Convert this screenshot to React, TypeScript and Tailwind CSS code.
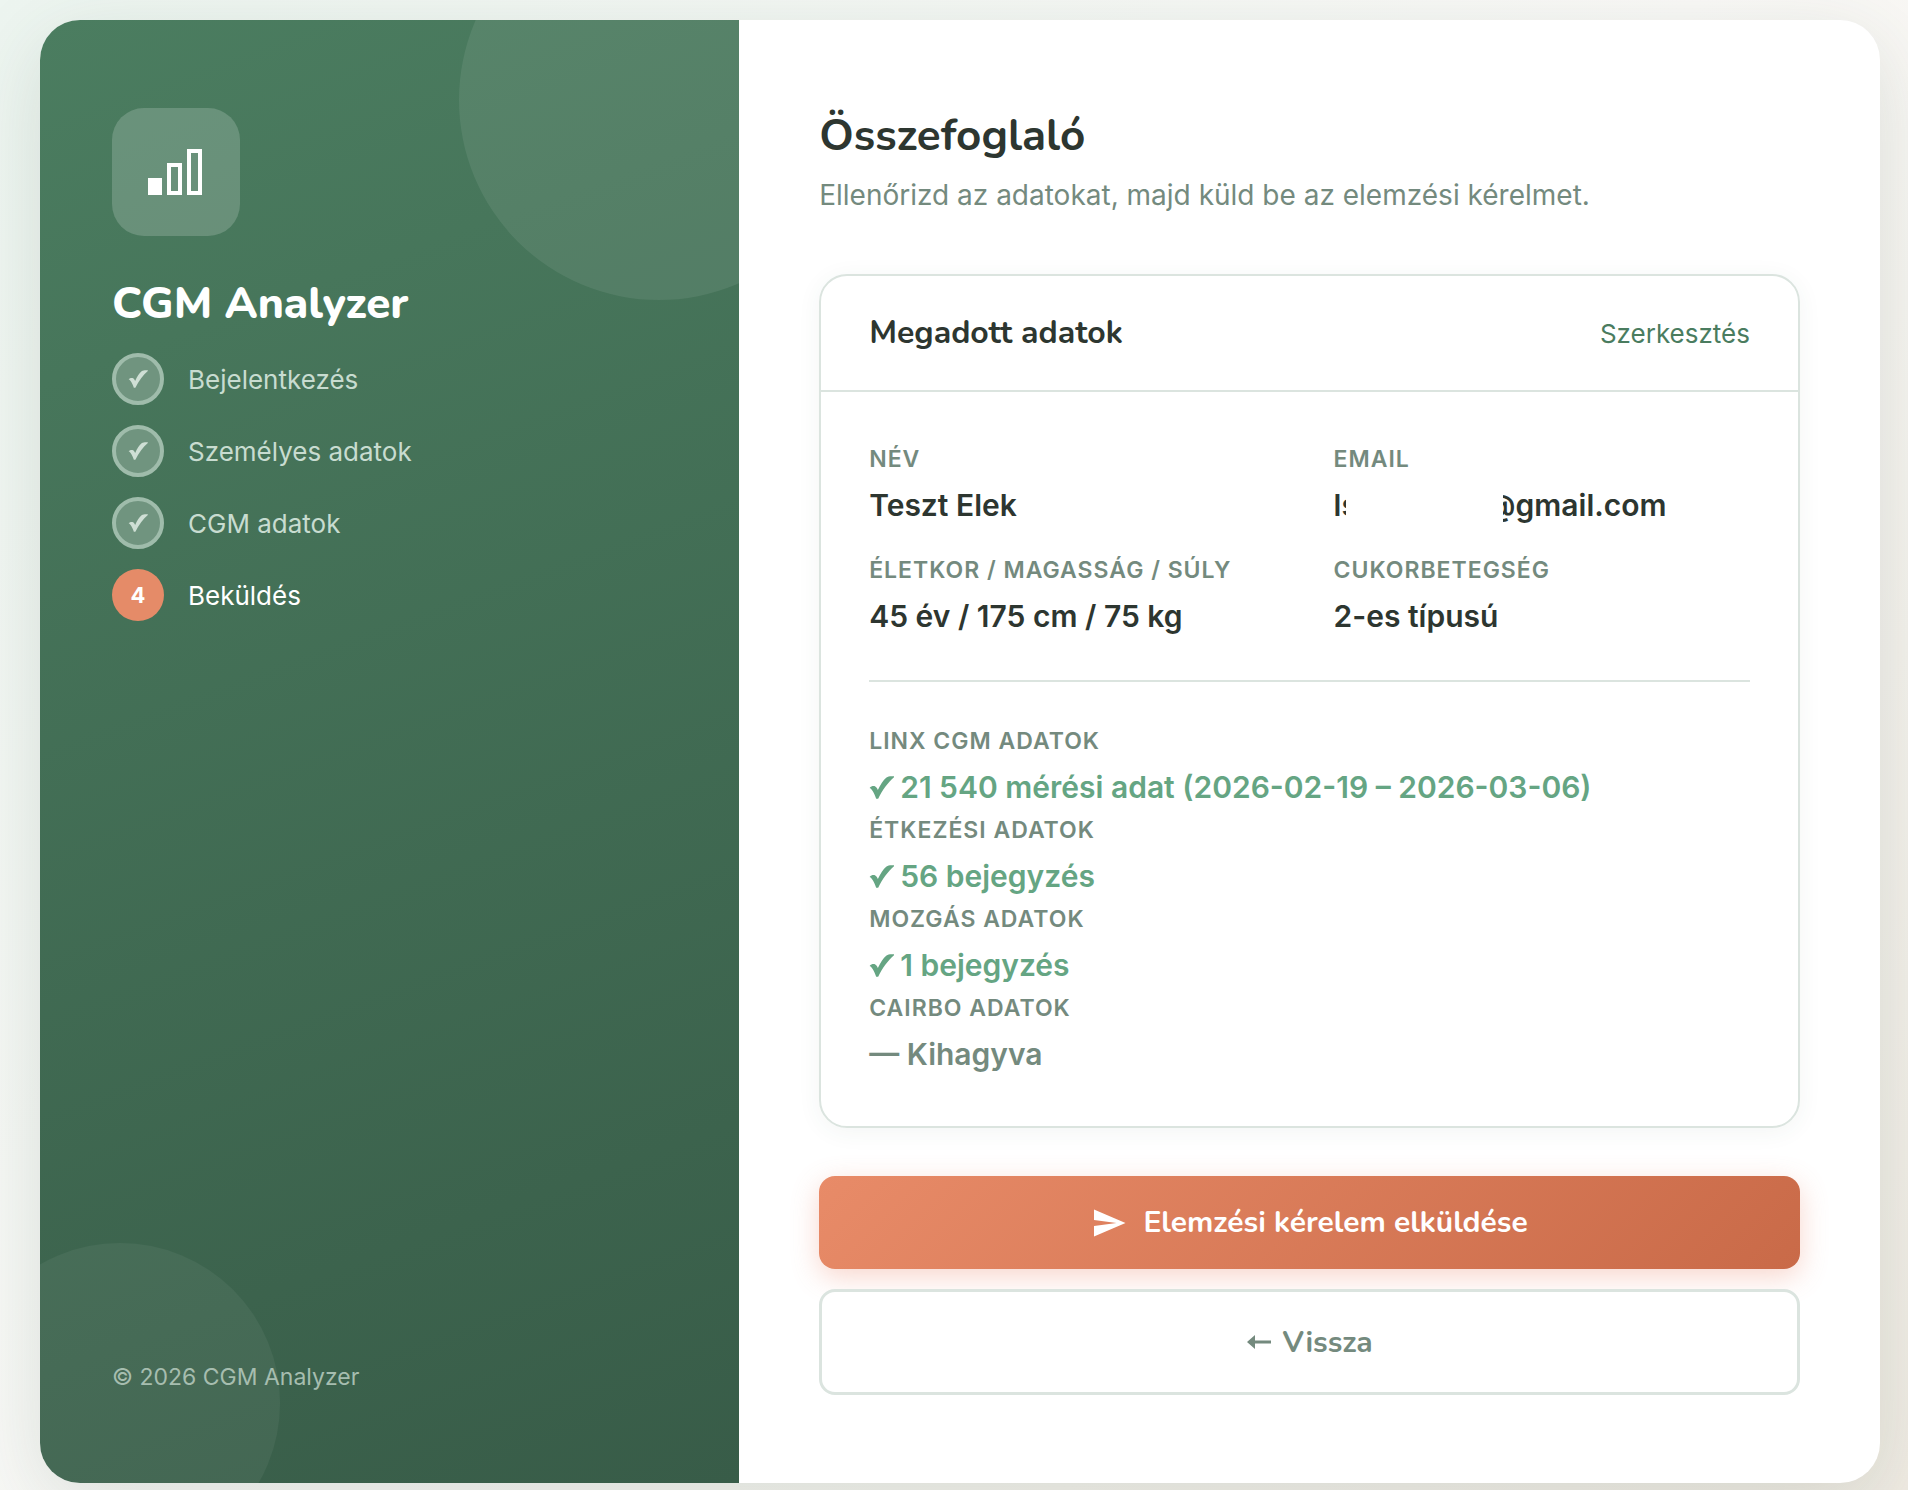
import clsx from 'clsx'

interface Step {
  label: string
  status: 'done' | 'active'
}

interface DataSource {
  label: string
  value: string
  skipped?: boolean
}

const STEPS: Step[] = [
  { label: 'Bejelentkezés', status: 'done' },
  { label: 'Személyes adatok', status: 'done' },
  { label: 'CGM adatok', status: 'done' },
  { label: 'Beküldés', status: 'active' },
]

const SOURCES: DataSource[] = [
  { label: 'Linx CGM adatok', value: '21 540 mérési adat (2026-02-19 – 2026-03-06)' },
  { label: 'Étkezési adatok', value: '56 bejegyzés' },
  { label: 'Mozgás adatok', value: '1 bejegyzés' },
  { label: 'Cairbo adatok', value: '— Kihagyva', skipped: true },
]

function CheckMark({ className }: { className: string }) {
  return (
    <svg viewBox="0 0 24 22" fill="currentColor" className={className} aria-hidden="true">
      <path d="M0.6 11.4C2 9.8 4.4 9.2 6 10C7.3 10.8 8 12 8.5 13.4C11 8 13.6 4 16.8 1.3C18.4 0.2 21 0 24 0.3V1.1C18.4 6.2 13 12.8 8.8 21.8H6.9C6 19 4.8 16.6 3.8 14.8C3 13.4 2 12 0.6 11.4Z" />
    </svg>
  )
}

function LogoIcon() {
  return (
    <svg viewBox="0 0 56 46" fill="currentColor" className="w-14" aria-hidden="true">
      <path d="M0 29h14v17H0z" />
      <path fillRule="evenodd" d="M19 14h15v32H19zM23 18v24h7V18z" />
      <path fillRule="evenodd" d="M39 0h15v46H39zM43 4v38h7V4z" />
    </svg>
  )
}

function StepItem({ step, number }: { step: Step; number: number }) {
  const done = step.status === 'done'
  return (
    <li className="flex items-center gap-6">
      <span
        className={clsx(
          'flex size-[52px] items-center justify-center rounded-full text-[22px] font-bold',
          done ? 'border-4 border-[#9fbcab] bg-[#70947f] text-[#cfdfd5]' : 'bg-[#e58b68] text-white'
        )}
      >
        {done ? <CheckMark className="h-[18px] w-5" /> : number}
      </span>
      <span className={clsx('text-[26px]', done ? 'text-[#c8dcd0]' : 'text-white')}>
        {step.label}
      </span>
    </li>
  )
}

const labelClass = 'mb-1 text-[23px] leading-[38px] font-semibold tracking-[1px] text-[#748a7e] uppercase'
const valueClass = 'text-[30px] leading-[47px] font-semibold'

function Sidebar() {
  return (
    <aside className="relative flex w-[38%] flex-col overflow-hidden bg-[linear-gradient(160deg,#4b7d60_0%,#385c48_100%)] px-18 py-22 text-white">
      <div className="absolute -top-[120px] -right-[120px] size-[400px] rounded-full bg-white/8" />
      <div className="absolute -bottom-20 -left-20 size-80 rounded-full bg-white/5" />
      <div className="flex size-32 items-center justify-center rounded-4xl bg-white/18">
        <LogoIcon />
      </div>
      <h1 className="mt-10 font-['Nunito','Open_Sans',sans-serif] text-[44px] leading-[57px] font-extrabold">
        CGM Analyzer
      </h1>
      <ol className="mt-5 flex flex-col gap-5">
        {STEPS.map((step, index) => (
          <StepItem key={step.label} step={step} number={index + 1} />
        ))}
      </ol>
      <p className="relative mt-auto text-[23px] leading-9 text-[#a6bdaf]">© 2026 CGM Analyzer</p>
    </aside>
  )
}

function SummaryCard() {
  return (
    <section className="mt-14 rounded-[28px] border-2 border-[#dbe4df] shadow-[0_4px_24px_rgba(50,80,62,0.06)]">
      <header className="flex items-center justify-between border-b-2 border-[#dbe4df] px-12 py-8">
        <h3 className="font-['Nunito','Open_Sans',sans-serif] text-[32px] leading-[50px] font-bold">
          Megadott adatok
        </h3>
        <button type="button" className="text-[26px] text-[#4a7c5f]">
          Szerkesztés
        </button>
      </header>
      <div className="p-12">
        <dl className="grid grid-cols-2 gap-x-12 gap-y-[22px]">
          <div>
            <dt className={labelClass}>Név</dt>
            <dd className={valueClass}>Teszt Elek</dd>
          </div>
          <div>
            <dt className={labelClass}>Email</dt>
            <dd className={clsx(valueClass, 'flex')}>
              {/* the address is redacted, only its edges stay visible */}
              <span className="w-3 overflow-hidden">ls</span>
              <span className="w-[157px]" />
              <span className="flex w-[164px] justify-end overflow-hidden">@gmail.com</span>
            </dd>
          </div>
          <div>
            <dt className={labelClass}>Életkor / Magasság / Súly</dt>
            <dd className={valueClass}>45 év / 175 cm / 75 kg</dd>
          </div>
          <div>
            <dt className={labelClass}>Cukorbetegség</dt>
            <dd className={valueClass}>2-es típusú</dd>
          </div>
        </dl>
        <dl className="mt-10 border-t-2 border-[#dbe4df] pt-10">
          {SOURCES.map(source => (
            <div key={source.label}>
              <dt className={labelClass}>{source.label}</dt>
              <dd
                className={clsx(
                  valueClass,
                  'flex items-center gap-1.5',
                  source.skipped ? 'text-[#748a7e]' : 'text-[#65a583]'
                )}
              >
                {!source.skipped && <CheckMark className="h-[23px] w-[25px]" />}
                {source.value}
              </dd>
            </div>
          ))}
        </dl>
      </div>
    </section>
  )
}

export default function App() {
  return (
    <div className="min-h-screen bg-[linear-gradient(135deg,#edf5f0_0%,#faf9f7_50%,#f0ebe3_100%)] pt-5 pr-7 pb-[7px] pl-10 font-['Inter',sans-serif] text-[#2d3630]">
      <div className="flex overflow-hidden rounded-[40px] bg-white shadow-[0_20px_80px_rgba(50,80,62,0.15)]">
        <Sidebar />
        <main className="flex-1 px-20 py-22">
          <h2 className="font-['Nunito','Open_Sans',sans-serif] text-[44px] leading-[57px] font-bold">
            Összefoglaló
          </h2>
          <p className="mt-2 text-[28px] leading-[45px] text-[#748a7e]">
            Ellenőrizd az adatokat, majd küld be az elemzési kérelmet.
          </p>
          <SummaryCard />
          <div className="mt-12 flex flex-col gap-5 font-['Nunito','Open_Sans',sans-serif] text-[30px] font-bold">
            <button
              type="button"
              className="flex h-[93px] items-center justify-center gap-4 rounded-2xl bg-[linear-gradient(135deg,#e88b68_0%,#c96a48_100%)] text-white shadow-[0_8px_28px_rgba(232,120,90,0.3)]"
            >
              <svg viewBox="0 0 24 24" fill="currentColor" className="size-9" aria-hidden="true">
                <path d="M2.01 21L23 12 2.01 3 2 10l15 2-15 2z" />
              </svg>
              Elemzési kérelem elküldése
            </button>
            <button
              type="button"
              className="flex h-[106px] items-center justify-center gap-3 rounded-2xl border-3 border-[#dbe4df] bg-white text-[#748a7e]"
            >
              <svg viewBox="0 0 24 14" fill="currentColor" className="w-6" aria-hidden="true">
                <path d="M0 7L8 0V5.6H24V8.4H8V14Z" />
              </svg>
              Vissza
            </button>
          </div>
        </main>
      </div>
    </div>
  )
}
